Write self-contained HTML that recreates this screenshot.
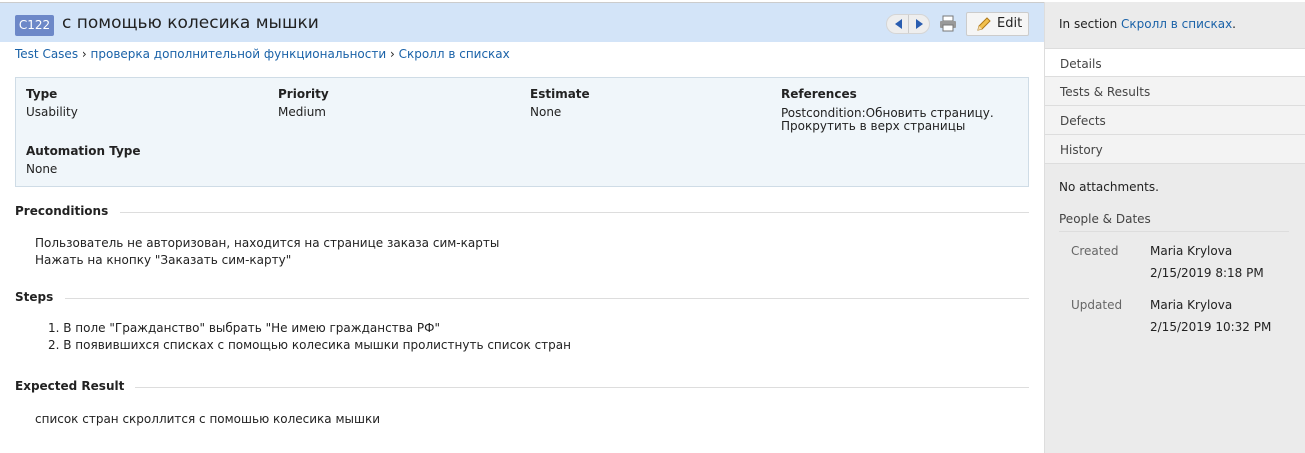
<!DOCTYPE html>
<html><head><meta charset="utf-8"><style>
*{margin:0;padding:0;box-sizing:border-box}
body{width:1305px;height:453px;background:#fff;font-family:"DejaVu Sans","Liberation Sans",sans-serif;font-size:12px;color:#222;position:relative;overflow:hidden}
a{color:#1a62a8;text-decoration:none}
.hdr{position:absolute;left:0;top:2px;width:1044px;height:40px;background:#d3e4f8;border-top:1px solid #ccc}
.badge{position:absolute;left:15px;top:12px;height:21px;width:39px;background:#6d88c8;color:#fff;border-radius:2px;font-size:12px;line-height:21px;text-align:center}
.title{position:absolute;left:62px;top:10px;font-size:17px;color:#222}
.nav{position:absolute;left:886px;top:11px;width:44px;height:20px;border-radius:10px;background:#eee;border:1px solid #d5d5d5}
.edit{position:absolute;left:966px;top:9px;width:63px;height:24px;background:#f5f5f5;border:1px solid #ccc;border-radius:2px;font-size:13px;line-height:22px;padding-left:30px}
.bc{position:absolute;left:15px;top:47px;font-size:12px}
.box{position:absolute;left:15px;top:77px;width:1014px;height:110px;background:#f0f6fa;border:1px solid #cfdce6}
.f{position:absolute;font-size:12px}
.f b{display:block;font-weight:bold;font-size:12px;margin-bottom:4px}
.sec{position:absolute;left:15px;font-weight:bold;font-size:12px;width:1014px}
.txt{position:absolute;left:35px;line-height:17px}
.side{position:absolute;left:1044px;top:2px;width:261px;height:451px;background:#ebebeb;border-left:1px solid #ddd}
.tab{position:absolute;left:1045px;width:260px;height:29px;line-height:30px;padding-left:15px;font-size:12px;color:#444;background:#f3f3f3;border-bottom:1px solid #ddd}
</style></head><body>
<div class="hdr">
<div class="badge">C122</div>
<div class="title">с помощью колесика мышки</div>
<div class="nav"><span style="position:absolute;left:8px;top:4px;width:0;height:0;border:5px solid transparent;border-right:7px solid #2a5db0;border-left:0"></span><span style="position:absolute;left:21px;top:0;width:1px;height:18px;background:#ccc"></span><span style="position:absolute;left:29px;top:4px;width:0;height:0;border:5px solid transparent;border-left:7px solid #2a5db0;border-right:0"></span></div>
<svg style="position:absolute;left:939px;top:12px" width="18" height="17" viewBox="0 0 18 17"><rect x="4" y="1" width="10" height="5" fill="#fff" stroke="#777"/><rect x="1" y="6" width="16" height="7" rx="1" fill="#999"/><rect x="4" y="10" width="10" height="6" fill="#fff" stroke="#777"/></svg>
<div class="edit"><svg style="position:absolute;left:9px;top:4px" width="15" height="15" viewBox="0 0 15 15"><path d="M2 13l1-4 8-8 3 3-8 8z" fill="#f2c14e" stroke="#b07a1a"/><path d="M2 13l1-4 3 3z" fill="#f5deb3"/></svg>Edit</div>
</div>
<div class="bc"><a>Test Cases</a> › <a>проверка дополнительной функциональности</a> › <a>Скролл в списках</a></div>
<div class="box">
<div class="f" style="left:10px;top:9px"><b>Type</b>Usability</div>
<div class="f" style="left:262px;top:9px"><b>Priority</b>Medium</div>
<div class="f" style="left:514px;top:9px"><b>Estimate</b>None</div>
<div class="f" style="left:765px;top:9px;line-height:13px"><b style="margin-bottom:6px;line-height:14px">References</b>Postcondition:Обновить страницу.<br>Прокрутить в верх страницы</div>
<div class="f" style="left:10px;top:66px"><b>Automation Type</b>None</div>
</div>
<div class="sec" style="top:204px">Preconditions<span style="position:absolute;left:105px;right:0;top:8px;height:1px;background:#ddd"></span></div>
<div class="txt" style="top:235px">Пользователь не авторизован, находится на странице заказа сим-карты<br>Нажать на кнопку "Заказать сим-карту"</div>
<div class="sec" style="top:290px">Steps<span style="position:absolute;left:50px;right:0;top:8px;height:1px;background:#ddd"></span></div>
<div class="txt" style="top:320px;left:48px">1. В поле "Гражданство" выбрать "Не имею гражданства РФ"<br>2. В появившихся списках с помощью колесика мышки пролистнуть список стран</div>
<div class="sec" style="top:379px">Expected Result<span style="position:absolute;left:120px;right:0;top:8px;height:1px;background:#ddd"></span></div>
<div class="txt" style="top:411px">список стран скроллится с помошью колесика мышки</div>
<div class="side"></div>
<div style="position:absolute;left:1059px;top:17px;font-size:12px">In section <a>Скролл в списках</a>.</div>
<div class="tab" style="top:48px;background:#fff;border-top:1px solid #ddd">Details</div>
<div class="tab" style="top:77px">Tests &amp; Results</div>
<div class="tab" style="top:106px">Defects</div>
<div class="tab" style="top:135px">History</div>
<div style="position:absolute;left:1059px;top:180px">No attachments.</div>
<div style="position:absolute;left:1059px;top:212px;font-size:12px;color:#444;width:230px;border-bottom:1px solid #ddd;padding-bottom:5px">People &amp; Dates</div>
<div style="position:absolute;left:1071px;top:244px;color:#666;font-size:12px">Created</div>
<div style="position:absolute;left:1150px;top:240px;line-height:22px">Maria Krylova<br>2/15/2019 8:18 PM</div>
<div style="position:absolute;left:1071px;top:298px;color:#666;font-size:12px">Updated</div>
<div style="position:absolute;left:1150px;top:294px;line-height:22px">Maria Krylova<br>2/15/2019 10:32 PM</div>
</body></html>
